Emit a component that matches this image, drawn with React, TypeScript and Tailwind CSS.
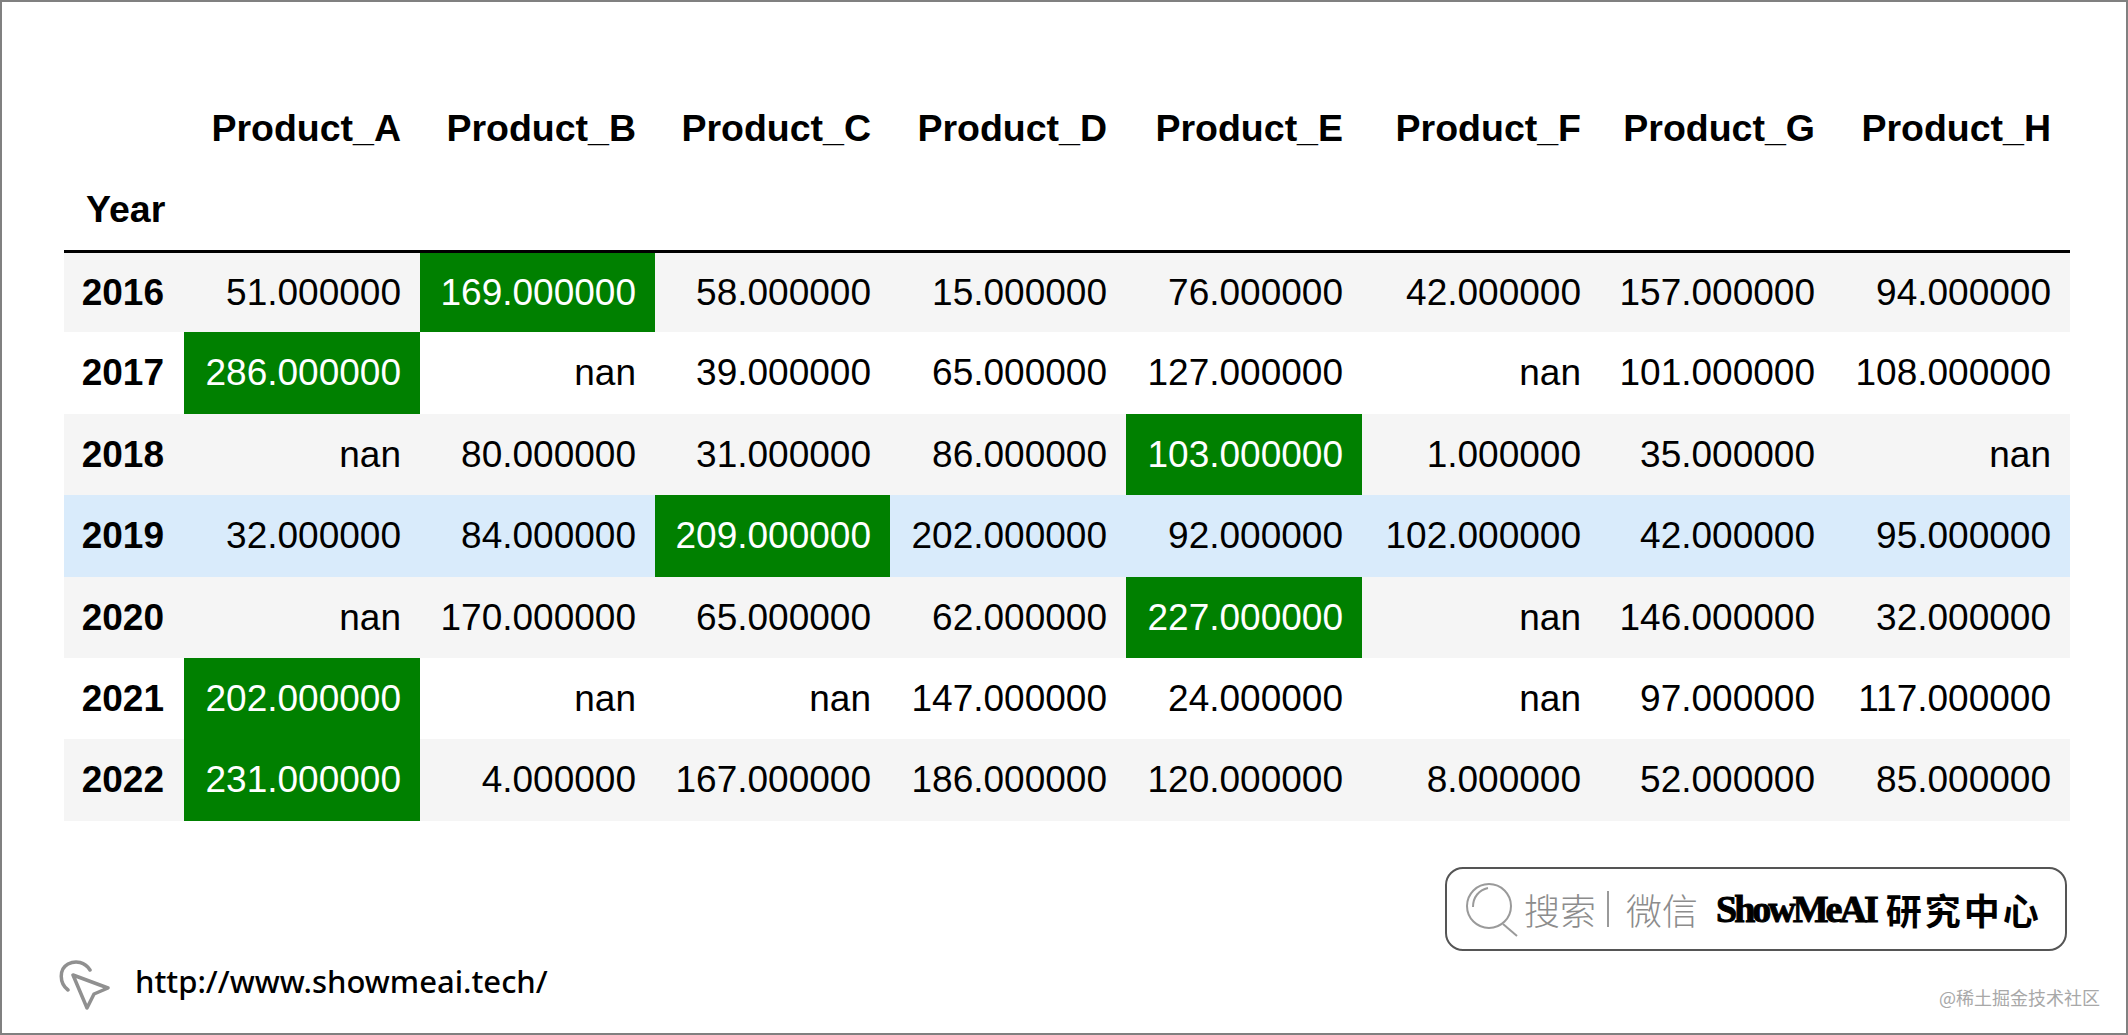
const headers = ['Product_A', 'Product_B', 'Product_C', 'Product_D', 'Product_E', 'Product_F', 'Product_G', 'Product_H']

const rows = [
  { year: '2016', h: 'h-[81px]', values: ['51.000000', '169.000000', '58.000000', '15.000000', '76.000000', '42.000000', '157.000000', '94.000000'], max: [1] },
  { year: '2017', h: 'h-[82px]', values: ['286.000000', 'nan', '39.000000', '65.000000', '127.000000', 'nan', '101.000000', '108.000000'], max: [0] },
  { year: '2018', h: 'h-[81px]', values: ['nan', '80.000000', '31.000000', '86.000000', '103.000000', '1.000000', '35.000000', 'nan'], max: [4] },
  { year: '2019', h: 'h-[82px]', values: ['32.000000', '84.000000', '209.000000', '202.000000', '92.000000', '102.000000', '42.000000', '95.000000'], max: [2] },
  { year: '2020', h: 'h-[81px]', values: ['nan', '170.000000', '65.000000', '62.000000', '227.000000', 'nan', '146.000000', '32.000000'], max: [4] },
  { year: '2021', h: 'h-[81px]', values: ['202.000000', 'nan', 'nan', '147.000000', '24.000000', 'nan', '97.000000', '117.000000'], max: [0] },
  { year: '2022', h: 'h-[82px]', values: ['231.000000', '4.000000', '167.000000', '186.000000', '120.000000', '8.000000', '52.000000', '85.000000'], max: [0] },
]

function rowColor(i: number) {
  if (i === 3) return 'bg-[#d9ebfb]'
  return i % 2 === 0 ? 'bg-[#f5f5f5]' : 'bg-white'
}

export default function App() {
  return (
    <div className="relative flex h-[1035px] w-[2128px] flex-col overflow-hidden border-2 border-[#808080] bg-white font-['Liberation_Sans',sans-serif] text-black">
      <div className="pl-[62px] pt-[86px]">
        <table className="w-[2006px] table-fixed border-collapse text-[37px]">
          <colgroup>
            <col className="w-[120px]" />
            <col className="w-[236px]" />
            <col className="w-[235px]" />
            <col className="w-[235px]" />
            <col className="w-[236px]" />
            <col className="w-[236px]" />
            <col className="w-[238px]" />
            <col className="w-[234px]" />
            <col className="w-[236px]" />
          </colgroup>
          <thead>
            <tr className="h-[81px]">
              <th></th>
              {headers.map((h) => (
                <th key={h} className="pr-[19px] text-right text-[37.5px] font-bold">{h}</th>
              ))}
            </tr>
            <tr className="h-[82px] border-b-[3px] border-black">
              <th className="pl-[22px] text-left text-[37.5px] font-bold">Year</th>
              <th colSpan={8}></th>
            </tr>
          </thead>
          <tbody>
            {rows.map((row, i) => (
              <tr key={row.year} className={`${row.h} ${rowColor(i)}`}>
                <th className="pr-[20px] text-right font-bold">{row.year}</th>
                {row.values.map((v, j) => (
                  <td
                    key={j}
                    className={row.max.includes(j) ? 'bg-[#008000] pr-[19px] text-right text-white' : 'pr-[19px] text-right'}
                  >
                    {v}
                  </td>
                ))}
              </tr>
            ))}
          </tbody>
        </table>
      </div>

      <div className="flex flex-1 items-start justify-between pl-[56px] pr-[59px] pt-[46px]">
        <div className="mt-[93px] flex items-center gap-[25px]">
          <svg width="52" height="50" viewBox="0 0 52 50" fill="none" stroke="#909090" strokeWidth="3.5" strokeLinecap="round" strokeLinejoin="round">
            <path d="M10 30C1 23 1 9 10 4C18 0 27 2 32 10" />
            <path d="M15 15L50 28L36 34L29 48Z" />
          </svg>
          <span className="-mt-[8px] font-['Noto_Sans',sans-serif] text-[31px] font-medium leading-none">http://www.showmeai.tech/</span>
        </div>

        <div className="flex h-[84px] w-[622px] items-center rounded-[18px] border-2 border-[#555555] pl-[19px]">
          <svg width="52" height="54" viewBox="0 0 52 54" fill="none" stroke="#9a9a9a" strokeWidth="2" className="mt-[2px]">
            <circle cx="23" cy="23" r="22" />
            <path d="M7 24C7 14 13 7 22 5" />
            <path d="M37 41L51 53" />
          </svg>
          <span className="ml-[6px] font-['Noto_Sans_CJK_SC',sans-serif] text-[36px] font-light text-[#8c8c8c]">搜索</span>
          <span className="ml-[11px] mr-[17px] h-[36px] w-[2px] bg-[#9a9a9a]"></span>
          <span className="font-['Noto_Sans_CJK_SC',sans-serif] text-[36px] font-light text-[#8c8c8c]">微信</span>
          <span className="ml-[18px] font-['Liberation_Serif',serif] text-[38px] font-bold tracking-[-3px] [-webkit-text-stroke:1px_black]">ShowMeAI</span>
          <span className="ml-[10px] font-['Noto_Sans_CJK_SC',sans-serif] text-[36px] font-bold tracking-[3px]">研究中心</span>
        </div>
      </div>

      <span className="absolute bottom-[27px] right-[26px] font-['Noto_Sans_CJK_SC',sans-serif] text-[18px] leading-none text-[#a8a8a8]">@稀土掘金技术社区</span>
    </div>
  )
}
